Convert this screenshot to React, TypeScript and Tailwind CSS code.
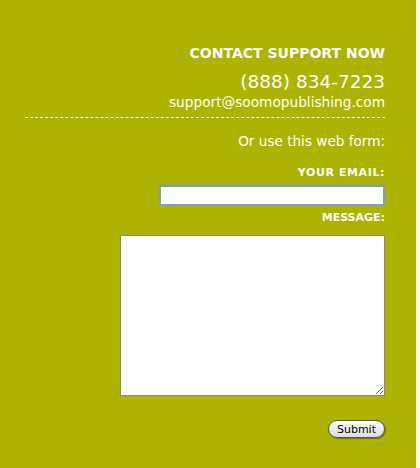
import React from 'react';

const font = { fontFamily: '"DejaVu Sans", "Open Sans", sans-serif' };

export default function App() {
  return (
    <div className="flex h-[468px] w-[420px] bg-white" style={font}>
      <div className="flex h-full w-[416px] flex-col bg-[#acb400] pl-[25px] pr-[31px] pt-[44px] text-right text-white">
        <h2 className="text-[14px] font-bold leading-[18px]">CONTACT SUPPORT NOW</h2>
        <p className="mt-[9px] text-[18.5px] leading-[22px]">(888) 834-7223</p>
        <p className="text-[13.7px] leading-[18px]">support@soomopublishing.com</p>
        <div className="mt-[6px] border-t border-dashed border-white/90" />

        <p className="mt-[14px] text-[13.6px] leading-[18px]">Or use this web form:</p>

        <label className="mt-[16px] text-[11px] font-bold leading-[14px] tracking-[0.6px]">YOUR EMAIL:</label>
        <input
          type="text"
          className="ml-auto mt-[5px] h-[21px] w-[226px] rounded-[2px] border-2 border-[#7f9dc4] bg-white outline-none"
        />

        <label className="mt-[5px] text-[11px] font-bold leading-[14px]">MESSAGE:</label>
        <textarea className="ml-auto mt-[10px] h-[161px] w-[265px] resize border border-[#8a8a6a] bg-white outline-none" />

        <div className="mt-[24px] flex justify-end">
          <button className="h-[18px] rounded-full border border-[#555] bg-gradient-to-b from-white to-[#dcdcdc] px-[8px] text-[11px] leading-none text-black shadow-[1px_1px_1px_rgba(0,0,0,0.35)]">
            Submit
          </button>
        </div>
      </div>
    </div>
  );
}
